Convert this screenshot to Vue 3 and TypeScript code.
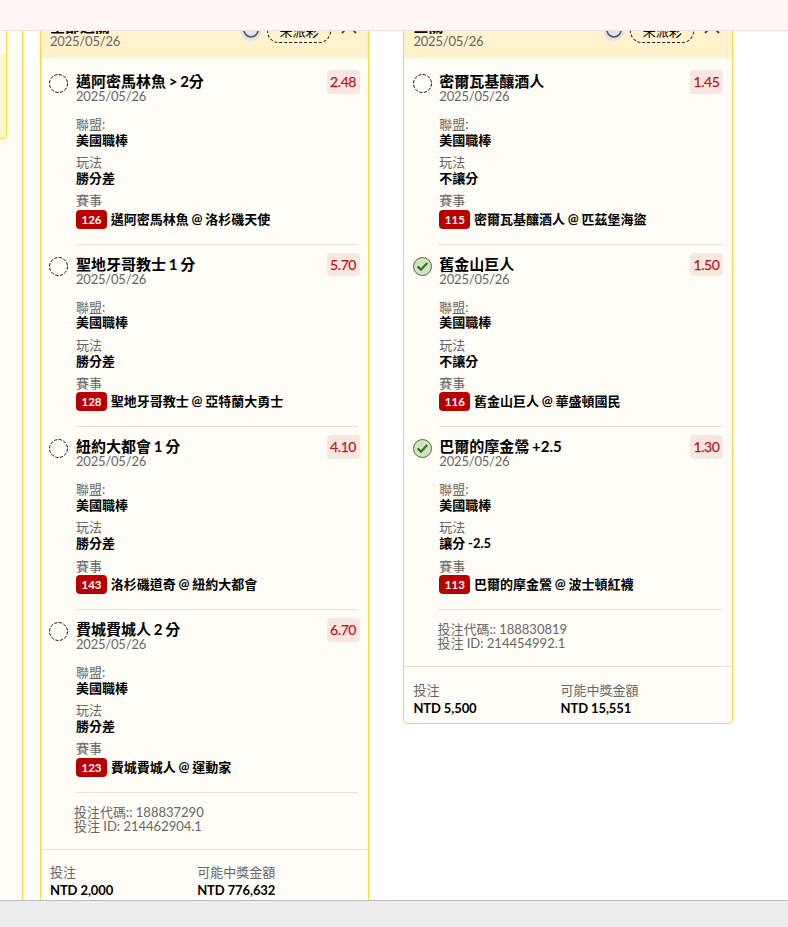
<script setup lang="ts">
interface Leg {
  title: string
  odds: string
  play: string
  code: string
  match: string
  won: boolean
}
interface Slip {
  title: string
  legs: Leg[]
  betCode: string
  betId: string
  stake: string
  payout: string
}

const date = '2025/05/26'
const slips: Slip[] = [
  {
    title: '全部過關',
    legs: [
      { title: '邁阿密馬林魚 > 2分', odds: '2.48', play: '勝分差', code: '126', match: '邁阿密馬林魚 @ 洛杉磯天使', won: false },
      { title: '聖地牙哥教士 1 分', odds: '5.70', play: '勝分差', code: '128', match: '聖地牙哥教士 @ 亞特蘭大勇士', won: false },
      { title: '紐約大都會 1 分', odds: '4.10', play: '勝分差', code: '143', match: '洛杉磯道奇 @ 紐約大都會', won: false },
      { title: '費城費城人 2 分', odds: '6.70', play: '勝分差', code: '123', match: '費城費城人 @ 運動家', won: false },
    ],
    betCode: '188837290',
    betId: '214462904.1',
    stake: 'NTD 2,000',
    payout: 'NTD 776,632',
  },
  {
    title: '三關',
    legs: [
      { title: '密爾瓦基釀酒人', odds: '1.45', play: '不讓分', code: '115', match: '密爾瓦基釀酒人 @ 匹茲堡海盜', won: false },
      { title: '舊金山巨人', odds: '1.50', play: '不讓分', code: '116', match: '舊金山巨人 @ 華盛頓國民', won: true },
      { title: '巴爾的摩金鶯 +2.5', odds: '1.30', play: '讓分 -2.5', code: '113', match: '巴爾的摩金鶯 @ 波士頓紅襪', won: true },
    ],
    betCode: '188830819',
    betId: '214454992.1',
    stake: 'NTD 5,500',
    payout: 'NTD 15,551',
  },
]
</script>

<template>
  <div class="page">
    <header class="topbar"></header>
    <main class="board">
      <aside class="side">
        <div class="side-card">
          <div class="side-head"></div>
          <div class="side-body"></div>
        </div>
      </aside>
      <section v-for="slip in slips" :key="slip.betId" class="slip">
        <div class="slip-head">
          <div class="head-text">
            <div class="title">{{ slip.title }}</div>
            <div class="date">{{ date }}</div>
          </div>
          <svg class="refresh" viewBox="0 0 22 22">
            <circle cx="11" cy="11" r="11" fill="#e3e4e9" />
            <circle cx="11" cy="11" r="7" fill="none" stroke="#555a60" stroke-width="1.7" />
          </svg>
          <span class="pill">未派彩</span>
          <svg class="chevron" viewBox="0 0 16 9">
            <path d="M1 8L8 1L15 8" fill="none" stroke="#444" stroke-width="1.8" />
          </svg>
        </div>
        <div class="legs">
          <article v-for="leg in slip.legs" :key="leg.code" class="leg">
            <svg class="status" viewBox="0 0 19 19">
              <template v-if="leg.won">
                <circle cx="9.5" cy="9.5" r="9" fill="#d3e2c7" stroke="#3b7a2a" stroke-width="1" />
                <path d="M4.6 9.4L8 12.7L14.2 6" fill="none" stroke="#2f7420" stroke-width="2.2" />
              </template>
              <circle v-else cx="9.5" cy="9.5" r="9" fill="none" stroke="#111" stroke-width="1" stroke-dasharray="3.2 1.512" />
            </svg>
            <div class="leg-main">
              <div class="leg-top">
                <div class="leg-name">
                  <div class="title">{{ leg.title }}</div>
                  <div class="date">{{ date }}</div>
                </div>
                <span class="odds">{{ leg.odds }}</span>
              </div>
              <dl class="facts">
                <dt>聯盟:</dt>
                <dd>美國職棒</dd>
                <dt>玩法</dt>
                <dd>{{ leg.play }}</dd>
                <dt>賽事</dt>
                <dd class="match"><span class="code">{{ leg.code }}</span>{{ leg.match }}</dd>
              </dl>
            </div>
          </article>
        </div>
        <div class="ids">
          <div>投注代碼:: {{ slip.betCode }}</div>
          <div>投注 ID: {{ slip.betId }}</div>
        </div>
        <footer class="totals">
          <div class="stake">
            <div class="label">投注</div>
            <div class="value">{{ slip.stake }}</div>
          </div>
          <div>
            <div class="label">可能中獎金額</div>
            <div class="value">{{ slip.payout }}</div>
          </div>
        </footer>
      </section>
    </main>
    <div class="bottombar"></div>
  </div>
</template>

<style>
body {
  background: #fff;
}
</style>

<style scoped>
.page {
  height: 927px;
  display: flex;
  flex-direction: column;
  overflow: hidden;
  font-family: Lato, 'Noto Sans CJK TC', sans-serif;
  font-size: 13px;
  color: #000;
}
.page * {
  box-sizing: border-box;
}
.topbar {
  flex: none;
  height: 31px;
  background: #fff7f6;
  border-bottom: 1px solid #f6dbe0;
}
.board {
  flex: none;
  height: 869px;
  display: flex;
  align-items: flex-start;
  overflow: hidden;
}
.bottombar {
  flex: 1;
  background: #ededed;
  border-top: 1px solid #b9bab9;
}
.side {
  flex: none;
  width: 23px;
  height: 869px;
  background: #fffdf5;
  border-right: 1px solid #fdd835;
}
.side-card {
  width: 7px;
  height: 108px;
  border: solid #fdd835;
  border-width: 0 1px 1px 0;
  border-bottom-right-radius: 4px;
  overflow: hidden;
}
.side-head {
  height: 23px;
}
.side-body {
  height: 84px;
  background: #fff7d1;
}
.slip {
  flex: none;
  width: 329.2px;
  margin: -22px 0 0 17px;
  background: #fffdf5;
  border: 1px solid #fdd835;
  border-radius: 4px;
  overflow: hidden;
}
.slip + .slip {
  margin-left: 34.2px;
}
.slip-head {
  height: 48px;
  padding: 8px 11.2px 0 9px;
  display: flex;
  align-items: flex-start;
  background: #fff2cc;
}
.head-text {
  flex: 1;
}
.title {
  font-size: 15px;
  font-weight: 700;
  line-height: 16px;
  word-spacing: -0.9px;
}
.date {
  line-height: 14px;
  color: #666;
  letter-spacing: -0.2px;
}
.refresh {
  width: 22px;
  height: 22px;
  margin-top: 1px;
}
.pill {
  width: 64px;
  height: 24px;
  margin: 1px 10px 0 5px;
  border: 1px dashed #111;
  border-radius: 12px;
  text-align: center;
  line-height: 22px;
}
.chevron {
  width: 16px;
  height: 9px;
  margin-top: 7px;
}
.legs {
  padding: 4.15px 8.2px 0 8.15px;
}
.leg {
  display: flex;
  height: 182.67px;
}
.status {
  flex: none;
  width: 19px;
  height: 19px;
  margin: 11.9px 7.85px 0 0;
}
.leg-main {
  flex: 1;
  margin-right: 1.8px;
  border-bottom: 1px solid #e3e1db;
}
.leg-top {
  display: flex;
  justify-content: space-between;
  margin-right: -1.8px;
  height: 40.85px;
}
.leg-name {
  padding-top: 10.85px;
}
.odds {
  width: 33px;
  height: 23.5px;
  margin-top: 8px;
  border-radius: 4px;
  background: #f8e7e1;
  color: #b71c1c;
  font-size: 14px;
  line-height: 24px;
  text-align: center;
  letter-spacing: -0.45px;
  text-indent: -0.9px;
  -webkit-text-stroke: 0.25px #b71c1c;
}
.facts {
  margin: 13.9px 0 0;
}
dt {
  line-height: 15.7px;
  color: #666;
}
dd {
  margin: 0 0 6.8px;
  font-weight: 700;
  line-height: 15.8px;
  word-spacing: -0.4px;
}
.match {
  display: flex;
  align-items: center;
  height: 19px;
  margin: 0.6px 0 0;
  line-height: 19px;
}
.code {
  width: 31px;
  height: 19px;
  margin-right: 3.7px;
  border-radius: 4px;
  background: #b80000;
  color: #fff;
  font-size: 11.5px;
  line-height: 20px;
  text-align: center;
}
.ids {
  height: 56.3px;
  padding: 12px 0 0 33px;
  line-height: 14px;
  color: #666;
}
.totals {
  display: flex;
  height: 56.6px;
  padding: 14.4px 9px 0;
  border-top: 1px solid #e3e1db;
}
.stake {
  width: 147.2px;
}
.label {
  line-height: 17px;
  color: #666;
}
.value {
  font-weight: 700;
  line-height: 18px;
  letter-spacing: -0.1px;
}
</style>
